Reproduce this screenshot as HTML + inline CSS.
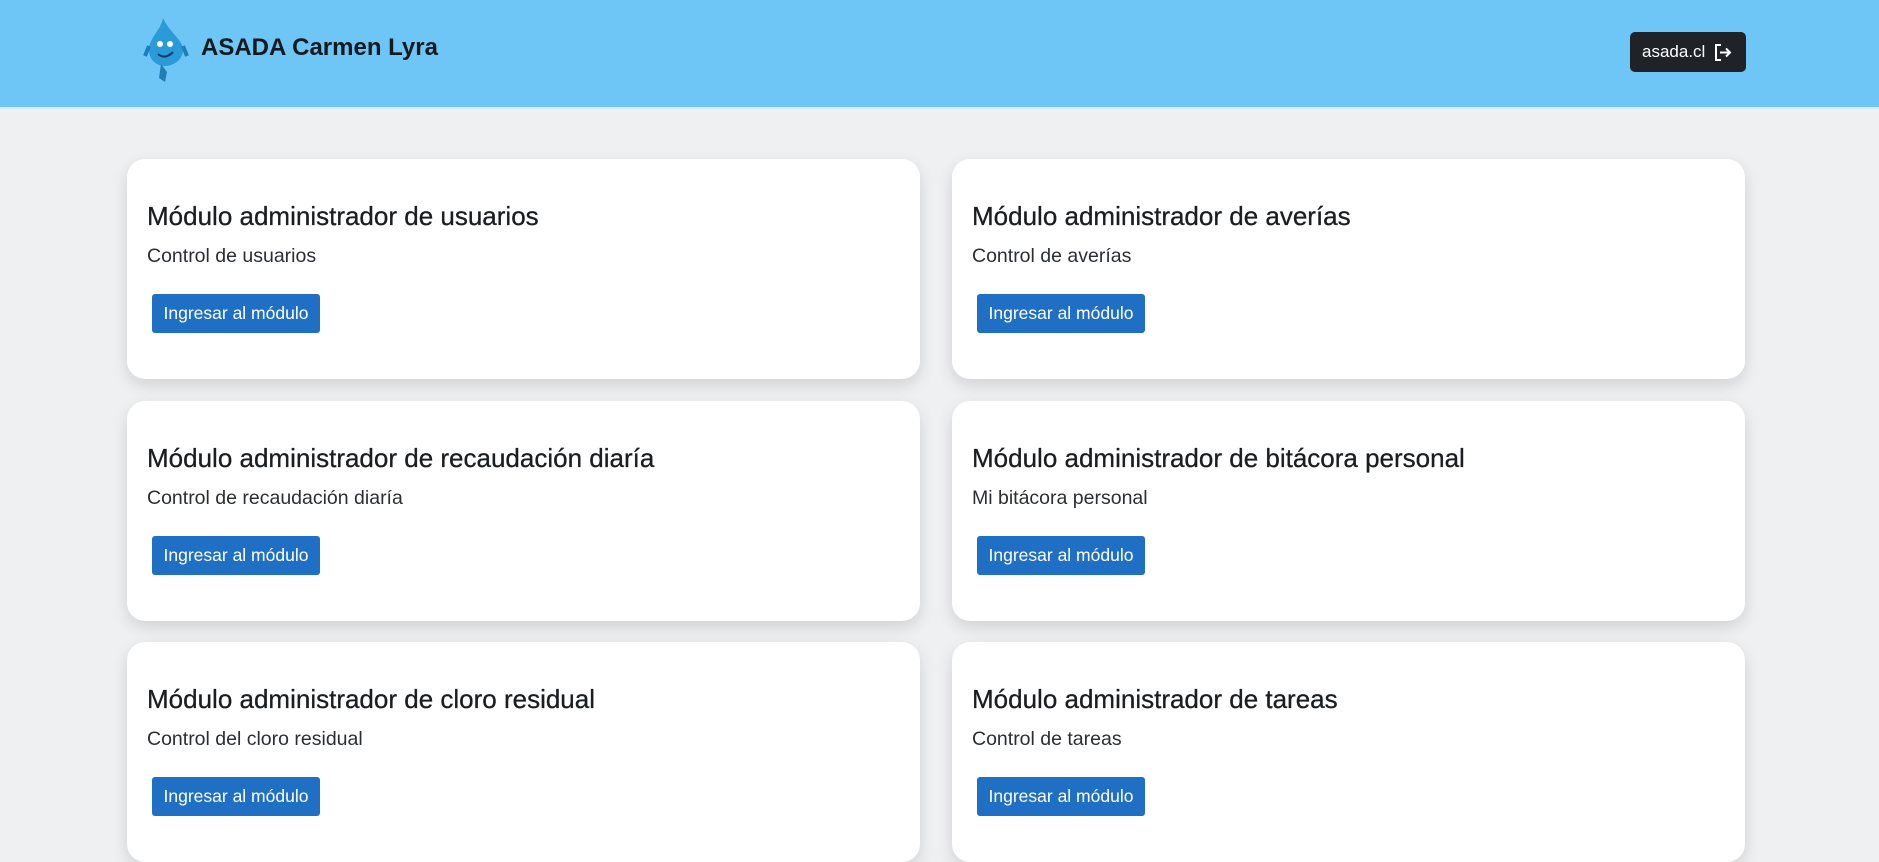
<!DOCTYPE html>
<html><head><meta charset="utf-8"><style>
*{box-sizing:border-box;margin:0;padding:0}
body{width:1879px;height:856px;overflow:hidden;background:#eff0f2;font-family:"Liberation Sans",sans-serif;position:relative}
.hdr{position:absolute;left:0;top:0;width:1879px;height:109px;background:#6dc6f6;border-bottom:2px solid #d8eefb}
.brand{position:absolute;left:201px;top:34px;font-size:24px;font-weight:bold;color:#16191d}
.logo{position:absolute;left:143px;top:16px}
.user{position:absolute;left:1630px;top:32px;width:116px;height:40px;background:#1f2327;border-radius:5px;color:#fff;font-size:17px;line-height:40px;padding-left:12px}
.user svg{position:absolute;left:84px;top:12px}
.card{position:absolute;width:793px;height:220px;background:#fff;border-radius:18px;box-shadow:0 6px 16px rgba(0,0,0,.13)}
.card h5{position:absolute;left:20px;top:42px;font-size:26px;font-weight:normal;color:#1b1e21;white-space:nowrap;-webkit-text-stroke:0.3px #1b1e21}
.card p{position:absolute;left:20px;top:86px;font-size:19.5px;color:#2b2f33}
.card .btn{position:absolute;left:25px;top:135px;width:168px;height:39px;background:#1f6fc5;border-radius:3px;color:#fff;font-size:17.5px;line-height:39px;text-align:center;white-space:nowrap}
</style></head><body>
<div class="hdr">
<svg class="logo" width="46" height="70" viewBox="0 0 46 70"><path d="M20 2 C18 14 6 22 6 34 C6 44 14 50 22 50 C30 50 40 44 40 34 C40 24 26 16 20 2Z" fill="#2a9ad8"/><path d="M18 48 L16 62 L22 66 L24 56 Z" fill="#1e7fb8"/><circle cx="17" cy="28" r="3" fill="#fff"/><circle cx="27" cy="28" r="3" fill="#fff"/><path d="M15 38 Q22 44 30 36" stroke="#0b3f66" stroke-width="2" fill="none"/><path d="M6 30 L2 40 M40 30 L44 40" stroke="#1e7fb8" stroke-width="4"/></svg>
<div class="brand">ASADA Carmen Lyra</div>
<div class="user">asada.cl<svg width="18" height="17" viewBox="0 0 18 17" fill="none" stroke="#fff" stroke-width="2"><path d="M7 1H2v15h5"/><path d="M6 8.5h10M12 4.5l4 4-4 4"/></svg></div>
</div>
<div class="card" style="left:127px;top:159px"><h5>Módulo administrador de usuarios</h5><p>Control de usuarios</p><div class="btn">Ingresar al módulo</div></div>
<div class="card" style="left:952px;top:159px"><h5>Módulo administrador de averías</h5><p>Control de averías</p><div class="btn">Ingresar al módulo</div></div>
<div class="card" style="left:127px;top:401px"><h5>Módulo administrador de recaudación diaría</h5><p>Control de recaudación diaría</p><div class="btn">Ingresar al módulo</div></div>
<div class="card" style="left:952px;top:401px"><h5>Módulo administrador de bitácora personal</h5><p>Mi bitácora personal</p><div class="btn">Ingresar al módulo</div></div>
<div class="card" style="left:127px;top:642px"><h5>Módulo administrador de cloro residual</h5><p>Control del cloro residual</p><div class="btn">Ingresar al módulo</div></div>
<div class="card" style="left:952px;top:642px"><h5>Módulo administrador de tareas</h5><p>Control de tareas</p><div class="btn">Ingresar al módulo</div></div>
</body></html>
